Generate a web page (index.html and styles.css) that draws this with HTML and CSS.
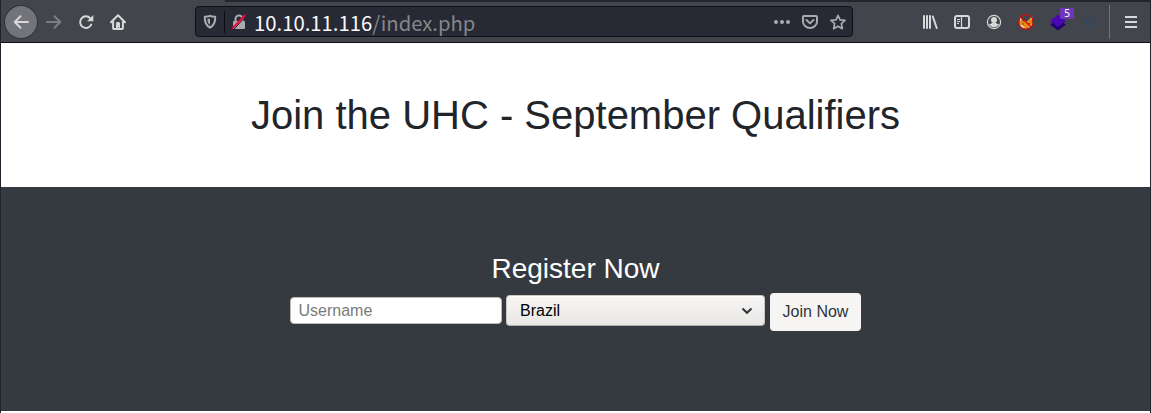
FILE: index.html
```html
<!DOCTYPE html>
<html lang="en">
<head>
<meta charset="utf-8">
<title>Join the UHC - September Qualifiers</title>
<link rel="stylesheet" href="styles.css">
</head>
<body>
<div class="window">
  <div class="tab-edge"></div>
  <nav class="toolbar">
    <div class="nav-buttons">
      <span class="back"><svg width="16" height="16" viewBox="0 0 16 16"><path class="line" d="M15 8H2M7.500 2.200 1.700 8l5.800 5.800"/></svg></span>
      <svg class="dim" width="16" height="16" viewBox="0 0 16 16"><path class="line" d="M1 8h13M8.500 2.200 14.300 8l-5.800 5.800"/></svg>
      <svg width="16" height="16" viewBox="0 0 16 16"><path class="line" d="M12.300 4.300A5.800 5.800 0 1 0 13.200 10.600"/><path class="fill" d="M15.300 1v6.200H9.100z"/></svg>
      <svg width="16" height="16" viewBox="0 0 16 16"><path class="line" d="M1 8.300 8 1.300l7 7M3.100 7v7.200c0 .5.300.8.800.8h8.200c.5 0 .8-.3.800-.8V7"/><path class="fill" d="M6 15V9.500C6 8.600 6.600 8 7.500 8h1c.9 0 1.500.6 1.500 1.500V15H8.700v-2H8v2z"/></svg>
    </div>
    <div class="url-bar">
      <svg class="shield" width="14" height="16" viewBox="0 0 14 16"><path class="line" d="M7 1.800c1.500.7 3.200.9 5.200 1 .2 4.700-.8 8.500-5.200 10.900C2.600 11.300 1.600 7.500 1.800 2.800c2-.1 3.700-.3 5.200-1z"/><path class="fill" d="M7 4.500v6.600C5 9.500 4.400 7.700 4.400 5.100 5.400 5 6.200 4.800 7 4.500z"/></svg>
      <span class="separator"></span>
      <svg class="lock" width="16" height="16" viewBox="0 0 16 16"><path class="line" d="M4.500 8V5a3.500 3.500 0 0 1 7 0v3"/><rect class="fill" x="2" y="7" width="12" height="8" rx="1"/><path class="lock-gap" d="m2.700 15.500 13-14"/><path class="slash" d="m1.300 14.500 13-13.500"/></svg>
      <span class="address"><b>10.10.11.116</b>/index.php</span>
      <div class="page-actions">
        <svg width="16" height="16" viewBox="0 0 16 16"><circle class="fill" cx="2" cy="8" r="2"/><circle class="fill" cx="8" cy="8" r="2"/><circle class="fill" cx="14" cy="8" r="2"/></svg>
        <svg width="16" height="16" viewBox="0 0 16 16"><path class="line" d="M2 2h12c.7 0 1 .3 1 1v4.500a7 6.500 0 0 1-14 0V3c0-.7.300-1 1-1z"/><path class="line" d="m4.500 6 3.500 3.400L11.500 6"/></svg>
        <svg width="16" height="16" viewBox="0 0 16 16"><path class="line star" d="m8 1.300 2 4.500 5 .6-3.600 3.300.9 5L8 12.200l-4.300 2.500.9-5L1 6.400l5-.6z"/></svg>
      </div>
    </div>
    <div class="tools">
      <svg width="16" height="16" viewBox="0 0 16 16"><path class="line" d="M2 2v12M5 2v12M8 2v12"/><path class="line" d="m10.800 2.500 3.900 11.500"/></svg>
      <svg width="16" height="16" viewBox="0 0 16 16"><rect class="line" x="1" y="2" width="14" height="12" rx="2"/><path class="thin" d="M7.500 2v12M3 5.500h3M3 7.500h3M3 9.500h2"/></svg>
      <svg width="16" height="16" viewBox="0 0 16 16"><circle class="thin" cx="8" cy="8" r="6.600"/><circle class="fill" cx="8" cy="6" r="3"/><path class="fill" d="M3 10c1.500 0 2.500-.2 3.600-1.200h2.800C10.500 9.800 11.500 10 13 10c-.8 2-2.700 3.200-5 3.200S3.800 12 3 10z"/></svg>
      <svg width="16" height="16" viewBox="0 0 16 16"><path fill="#e88a1a" d="M1.500 4 5.500 7.500l4-.5L13 3.500l1 4 .8 2.500-3.300 3-4 2-4-1.500L1 11z"/><path fill="#ece5dc" d="m1.500 3.500 2.500 1.500-1.800 2zM12 4l2.300-1-.1 3.200zM1.500 11l2.500 0 3 3-2.500-.3zM11 12.500l3-2-1.200 2.500-2.300 1z"/><path fill="#703d16" d="m4 9 2.500 1-1.500.8zM10 9.500l2.500-1-1 2z"/><circle cx="8" cy="8" r="7.300" fill="none" stroke="#d20b0b" stroke-width="1.200"/><path d="m3 3 10 10" stroke="#d20b0b" stroke-width="1.200"/></svg>
      <span class="layers"><svg width="18" height="18" viewBox="0 0 18 18"><path fill="#21006f" d="m1 11.500 8-5 8 5-8 6z"/><path fill="#4a08b5" d="m1 8 8-6.500L17 8l-8 6z"/></svg><span class="badge">5</span></span>
      <svg class="globe" width="16" height="16" viewBox="0 0 16 16"><circle cx="8" cy="8" r="6.700" stroke-dasharray="2 1.500"/><circle cx="8" cy="8" r="4"/><path d="M1 8h14M3 4.500h10M3 11.500h10"/></svg>
    </div>
    <div class="menu"><svg width="12" height="12" viewBox="0 0 12 12"><path class="line" d="M0 1h12M0 6h12M0 11h12"/></svg></div>
  </nav>
  <header class="hero"><h1>Join the UHC - September Qualifiers</h1></header>
  <main class="register">
    <h2>Register Now</h2>
    <form class="form">
      <input class="username" type="text" placeholder="Username">
      <div class="country"><span>Brazil</span><svg width="12" height="8" viewBox="0 0 12 8"><path d="m1.500 1.500 4.500 4.300 4.500-4.300"/></svg></div>
      <button class="join" type="button">Join Now</button>
    </form>
  </main>
</div>
</body>
</html>
```
FILE: styles.css
```css
* { box-sizing: border-box; }
body { margin: 0; background: #fff; font-family: "Liberation Sans", Arial, sans-serif; overflow: hidden; }
svg { display: block; flex: none; }
.window { height: 413px; border: solid #20222c; border-width: 0 1px; }
.tab-edge { height: 2px; background: linear-gradient(90deg, #42454c 224px, #22252e 224px); }
.toolbar { height: 41px; display: flex; align-items: center; background: #42454c; border-bottom: 1px solid #0c0c12; color: #d8d8d8; }
.line { fill: none; stroke: currentColor; stroke-width: 2; stroke-linecap: round; stroke-linejoin: round; }
.thin { fill: none; stroke: currentColor; stroke-width: 1.2; }
.fill { fill: currentColor; }
.nav-buttons { display: flex; align-items: center; gap: 16px; width: 194px; padding-left: 4px; }
.back { display: flex; align-items: center; justify-content: center; width: 32px; height: 32px; margin-right: -7px; border-radius: 50%; background: #737479; box-shadow: 0 0 0 1px #303238; }
.dim { color: #7c7e83; }
.url-bar { display: flex; align-items: center; width: 658px; height: 31px; margin-top: -1px; background: #272934; border: 1px solid #101116; border-radius: 4px; color: #aaabae; }
.shield { margin-left: 7px; }
.separator { width: 1px; height: 22px; margin: 0 6px 0 7px; background: #0c0d13; }
.lock-gap { stroke: #272934; stroke-width: 1; }
.slash { stroke: #ee0a3c; stroke-width: 2; }
.address { margin: 1px 0 0 7px; font: 20.3px/28px "Noto Sans CJK SC", "Noto Sans", sans-serif; color: #85868b; white-space: pre; }
.address b { font-weight: 400; color: #f9f9fa; }
.page-actions { display: flex; gap: 12px; margin-left: auto; padding-right: 6px; }
.star { stroke-width: 1.7; }
.tools { display: flex; align-items: center; gap: 16px; margin-left: 69px; }
.layers { position: relative; width: 18px; margin: 0 -1px; }
.badge { position: absolute; left: 11px; top: -5px; width: 14px; height: 11px; border-radius: 1px; background: #6c38b9; color: #fff; font: 10px/11px "Noto Sans", sans-serif; text-align: center; }
.globe { fill: none; stroke: #34485f; stroke-width: 1; }
.menu { display: flex; align-items: center; height: 34px; margin-left: 11px; padding-left: 15px; border-left: 1px solid #72747a; }
.menu .line { stroke-linecap: butt; }
.hero { height: 144px; padding-top: 48px; text-align: center; background: #fff; color: #212529; }
.hero h1 { margin: 0; font-size: 40px; line-height: 48px; font-weight: 400; }
.register { height: 224px; padding-top: 65px; background: #343a40; color: #fff; }
.register h2 { margin: 0; font-size: 28px; line-height: 34px; font-weight: 400; text-align: center; }
.form { display: flex; justify-content: center; align-items: center; margin-top: 7px; height: 38px; }
.username { width: 212px; height: 27px; margin: -3px 4px 0 0; padding: 0 7.5px; border: 1px solid #c1b9b3; border-radius: 4px; background: #fff; font: 16px "Liberation Sans", Arial, sans-serif; }
.username::placeholder { color: #7a7a7a; }
.country { display: flex; align-items: center; justify-content: space-between; width: 259px; height: 31px; margin: -3px 5px 0 0; padding: 0 11px 0 13px; border: 1px solid #cdc7c2; border-bottom-color: #b5aea8; border-radius: 4px; background: linear-gradient(#f6f5f3, #e9e8e6); box-shadow: inset 0 1px #fff; color: #000; font-size: 16px; }
.country path { fill: none; stroke: #2e3436; stroke-width: 2; }
.join { width: 91px; height: 38px; padding: 0; border: 0; border-radius: 4px; background: #f6f5f4; color: #2e3436; font: 16px "Liberation Sans", Arial, sans-serif; }
```
